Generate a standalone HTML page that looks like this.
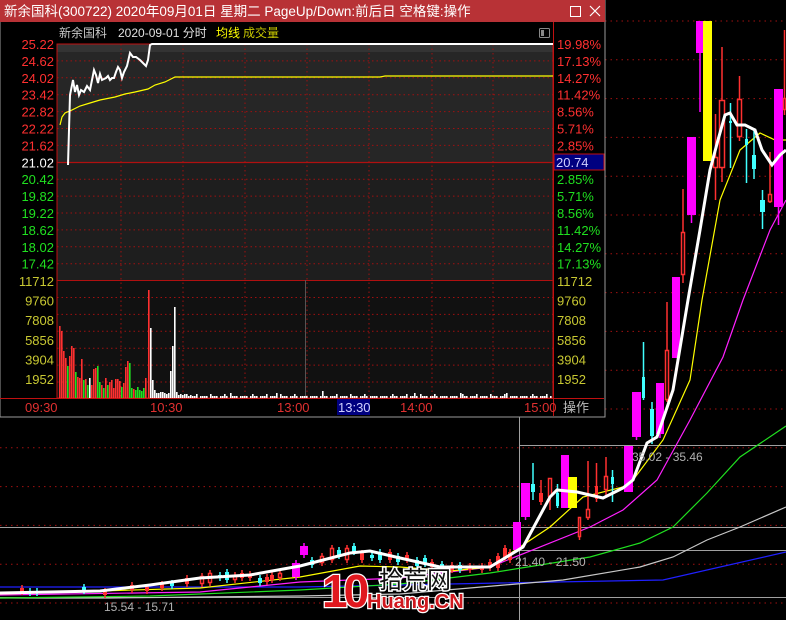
<!DOCTYPE html>
<html><head><meta charset="utf-8"><style>
html,body{margin:0;padding:0;background:#000;width:786px;height:620px;overflow:hidden}
svg{display:block}
text{font-family:"Liberation Sans","Noto Sans CJK SC",sans-serif}
</style></head><body>
<svg id="s" width="786" height="620" viewBox="0 0 786 620" xmlns="http://www.w3.org/2000/svg">
<rect width="786" height="620" fill="#000"/>
<g id="bg"></g>
<g id="pop">
<rect x="0" y="0" width="605" height="417" fill="#000" stroke="#9a9a9a" stroke-width="1"/>
<rect x="0" y="0" width="605" height="22" fill="#b83236"/>
<text x="4" y="16" fill="#fff" font-size="13.5">新余国科(300722) 2020年09月01日 星期二 PageUp/Down:前后日 空格键:操作</text>
<rect x="570.5" y="6.5" width="10" height="10" fill="none" stroke="#fff" stroke-width="1"/>
<path d="M590 6 L600 16 M600 6 L590 16" stroke="#fff" stroke-width="1.2"/>
<text x="59" y="37" fill="#c8c8c8" font-size="12">新余国科</text>
<text x="118" y="37" fill="#e0e0e0" font-size="12">2020-09-01 分时</text>
<text x="216" y="37" fill="#ffff00" font-size="12">均线</text>
<text x="243" y="37" fill="#c8c800" font-size="12">成交量</text>
<rect x="539.5" y="28.5" width="10" height="9" fill="none" stroke="#888" rx="1"/><rect x="541" y="30" width="3" height="6" fill="#888"/>
<rect x="57" y="44" width="496" height="118" fill="#262626"/>
<rect x="57" y="44" width="496" height="8" fill="#333"/>
<rect x="57" y="162" width="496" height="118" fill="#1e1e1e"/>
<rect x="57" y="280" width="496" height="118" fill="#111"/>
<g id="pgrid"></g>
<rect x="57" y="44" width="496" height="354" fill="none" stroke="#c01010" stroke-width="1"/>
<line x1="57" y1="162.5" x2="553" y2="162.5" stroke="#b01010" stroke-width="1.2"/>
<line x1="57" y1="280.5" x2="553" y2="280.5" stroke="#b01010"/>
<line x1="0" y1="398.5" x2="604" y2="398.5" stroke="#c01010"/>
<line x1="553.5" y1="22" x2="553.5" y2="416" stroke="#c01010"/>
<line x1="305.5" y1="280" x2="305.5" y2="398" stroke="#555" stroke-width="1"/>
<g id="vol"></g>
<polyline fill="none" stroke="#ffff00" stroke-width="1.2" points="60,125 62,117 65,113 72,110 80,106 90,103 100,100 115,97 125,94 135,92 148,89 155,85 165,82 175,77 200,77 380,77 385,76 553,76"/>
<polyline fill="none" stroke="#fff" stroke-width="2" points="68,165 69,130 70,95 72,85 73,80 75,92 77,85 79,95 81,90 84,92 87,86 90,90 92,80 94,70 96,75 98,83 100,74 102,80 104,79 106,78 108,76 110,80 112,78 114,78 116,72 118,67 120,70 122,78 124,72 127,66 130,53 133,57 136,57 140,60 144,64 146,66 148,60 150,45 152,44 553,44"/>
<g font-size="13" text-anchor="end" id="llab"></g>
<g font-size="13" id="rlab"></g>
<rect x="554" y="154" width="50" height="16" fill="#000080" stroke="#c01010"/>
<text x="556" y="167" fill="#d0d0ff" font-size="13">20.74</text>
<text x="25" y="412" fill="#e03030" font-size="13">09:30</text>
<text x="150" y="412" fill="#e03030" font-size="13">10:30</text>
<text x="277" y="412" fill="#e03030" font-size="13">13:00</text>
<rect x="337" y="399" width="33" height="16" fill="#000080"/>
<text x="338" y="412" fill="#d0d0ff" font-size="13">13:30</text>
<text x="400" y="412" fill="#e03030" font-size="13">14:00</text>
<text x="524" y="412" fill="#e03030" font-size="13">15:00</text>
<text x="563" y="412" fill="#bbb" font-size="13">操作</text>
</g>
<g>
<text x="322" y="607" font-size="46" font-weight="bold" fill="#e0181e" stroke="#fff" stroke-width="2.5" paint-order="stroke" letter-spacing="-4" font-family="Liberation Sans,sans-serif">10</text>
<text x="379" y="588" font-size="24" fill="#111" stroke="#fff" stroke-width="3" paint-order="stroke">拾荒网</text>
<text x="367" y="608" font-size="20" font-weight="bold" fill="#d0181e" stroke="#fff" stroke-width="2.5" paint-order="stroke">Huang.CN</text>
</g>
</svg>
<script>
var NS="http://www.w3.org/2000/svg";
function el(p,t,a){var e=document.createElementNS(NS,t);for(var k in a)e.setAttribute(k,a[k]);p.appendChild(e);return e;}
var bg=document.getElementById('bg');
for(var y=21;y<620;y+=38.8){el(bg,'line',{x1:0,y1:y.toFixed(1),x2:786,y2:y.toFixed(1),stroke:'#a01010','stroke-dasharray':'1.5,4','stroke-width':1});}
[[445,'#a0a0a0',520],[527,'#a0a0a0',0],[550,'#a0a0a0',520],[597,'#a0a0a0',0]].forEach(function(l){el(bg,'line',{x1:l[2],y1:l[0]+.5,x2:786,y2:l[0]+.5,stroke:l[1],'stroke-width':1});});
el(bg,'line',{x1:519.5,y1:417,x2:519.5,y2:620,stroke:'#a0a0a0'});
function pl(pts,c,w){el(bg,'polyline',{points:pts,fill:'none',stroke:c,'stroke-width':w});}
pl('0,587 300,587 400,585 500,583 663,580 786,552','#2020ff',1.2);
pl('0,598 110,598 200,597 300,596 400,594 563,580 640,567 673,557 707,540 740,527 786,507','#c8c8c8',1.2);
pl('0,598 150,596 300,590 400,584 490,573 590,557 640,543 673,527 707,493 740,457 786,426','#20e020',1.2);
pl('0,595 200,592 300,582 400,578 490,567 590,527 623,510 657,480 690,420 723,357 743,300 770,230 786,200','#ff20ff',1.2);
pl('0,594 200,588 300,577 360,566 400,567 450,571 490,567 550,527 583,497 623,487 633,480 663,440 690,380 702,300 720,200 740,150 760,133 775,140 786,140','#ffff00',1.2);
var C=[[513,8,522,550,522,552,'m'],[521,9,483,517,483,520,'m'],[531,4,484,492,463,500,'c'],[539,4,493,502,480,505,'r'],[548,4,478,497,479,510,'h'],[556,3,493,506,484,508,'c'],[561,8,455,508,455,508,'m'],[568,9,477,508,477,508,'y'],[578,3,517,537,517,540,'h'],[586,4,509,518,461,520,'h'],[595,3,486,499,463,502,'r'],[604,4,476,490,457,496,'h'],[611,3,477,484,470,502,'c'],[624,9,446,492,446,492,'m'],[632,9,392,437,392,440,'m'],[642,3,377,398,342,400,'c'],[650,4,409,436,402,444,'c'],[656,8,383,434,383,438,'m'],[665,4,350,400,302,402,'h'],[672,8,277,358,277,358,'m'],[681,4,232,275,189,283,'h'],[687,9,137,215,137,223,'m'],[696,8,21,53,21,112,'m'],[703,9,21,161,21,161,'y'],[713,5,157,168,114,200,'h'],[719,6,100,168,47,182,'h'],[729,3,121,123,103,168,'c'],[737,5,99,137,76,141,'h'],[745,3,139,145,129,183,'c'],[752,4,155,169,130,179,'c'],[760,5,200,212,190,229,'c'],[768,4,194,202,152,203,'h'],[774,9,89,207,89,225,'m'],[783,3,98,110,30,115,'h']];
var sm=[[20,588,592,'r'],[28,591,593,'c'],[35,591,593,'c'],[82,587,591,'c'],[103,591,595,'r'],[130,585,590,'r'],[145,587,591,'r'],[160,584,588,'r'],[170,583,586,'c'],[185,578,584,'r'],[200,576,584,'h'],[208,573,583,'h'],[218,575,578,'c'],[225,572,580,'c'],[233,575,580,'h'],[240,573,578,'r'],[248,574,578,'r'],[258,578,583,'c'],[265,577,582,'r'],[270,575,580,'r'],[278,573,578,'h'],[292,563,577,'m'],[300,546,555,'m'],[310,560,565,'c'],[320,556,563,'h'],[330,548,560,'h'],[337,550,556,'c'],[345,548,560,'h'],[352,546,552,'c'],[360,553,560,'r'],[370,555,558,'c'],[378,552,560,'c'],[388,552,560,'r'],[396,556,562,'c'],[405,555,560,'r'],[415,560,566,'c'],[423,558,564,'c'],[430,562,567,'r'],[440,564,568,'c'],[450,565,570,'r'],[458,565,570,'c'],[468,566,570,'r'],[480,566,570,'r'],[488,562,568,'r'],[496,556,568,'r'],[503,548,558,'r'],[508,552,560,'r']];
sm.forEach(function(s){C.push([s[0],s[3]=='m'?8:4,s[1],s[2],s[1]-3,s[2]+3,s[3]]);});
var col={m:'#ff00ff',y:'#ffff00',c:'#40ffff',r:'#ff3030',h:'#ff3030'};
C.forEach(function(c){var x=c[0],w=c[1],cx=x+w/2;el(bg,'line',{x1:cx,y1:c[4],x2:cx,y2:c[5],stroke:col[c[6]],'stroke-width':1.5});
 if(c[6]=='h')el(bg,'rect',{x:x+.5,y:c[2]+.5,width:w-1,height:Math.max(1,c[3]-c[2]-1),fill:'#000',stroke:col.h,'stroke-width':1.5});
 else el(bg,'rect',{x:x,y:c[2],width:w,height:Math.max(2,c[3]-c[2]),fill:col[c[6]]});});
pl('0,593 100,591 150,585 200,578 250,575 300,566 350,553 370,551 400,558 440,567 490,567 523,547 550,497 557,490 577,492 603,498 623,488 633,480 647,443 657,437 673,390 688,300 700,230 710,170 718,140 725,115 730,113 737,125 745,125 755,130 762,150 772,165 780,155 786,150','#fff',3);
[[632,461,'35.02 - 35.46'],[515,566,'21.40 - 21.50'],[104,611,'15.54 - 15.71']].forEach(function(t){var e=el(bg,'text',{x:t[0],y:t[1],fill:'#b0b0b0','font-size':12});e.textContent=t[2];});
var pg=document.getElementById('pgrid');
for(var i=1;i<21;i++){var y=44+i*16.9;if(Math.abs(y-162)<2||Math.abs(y-280)<2)continue;el(pg,'line',{x1:57,y1:y.toFixed(1),x2:553,y2:y.toFixed(1),stroke:'#a01010','stroke-dasharray':'1.5,3'});}
[121,183,245,307,369,432,493].forEach(function(x){el(pg,'line',{x1:x,y1:44,x2:x,y2:398,stroke:'#a01010','stroke-dasharray':'1.5,3'});});
var V=[[59,326,'r'],[61,331,'r'],[63,351,'r'],[65,358,'r'],[67,366,'g'],[69,356,'r'],[71,346,'r'],[73,348,'r'],[75,372,'g'],[77,377,'r'],[79,378,'r'],[81,359,'r'],[83,380,'g'],[85,379,'r'],[87,385,'g'],[89,378,'w'],[91,385,'r'],[93,369,'r'],[95,368,'r'],[97,366,'g'],[99,382,'g'],[101,385,'r'],[103,388,'g'],[105,378,'r'],[107,385,'g'],[109,382,'r'],[111,380,'r'],[113,388,'r'],[115,379,'r'],[117,379,'r'],[119,381,'r'],[121,387,'g'],[123,383,'r'],[125,367,'r'],[127,361,'r'],[129,363,'g'],[131,388,'g'],[133,389,'r'],[135,390,'g'],[137,387,'g'],[139,390,'g'],[141,391,'g'],[143,388,'g'],[145,378,'r'],[148,290,'r'],[150,328,'w'],[152,380,'w'],[154,390,'w'],[156,393,'w'],[158,393,'w'],[160,392,'w'],[162,392,'w'],[164,393,'w'],[166,394,'w'],[168,393,'w'],[170,371,'w'],[172,346,'w'],[174,307,'w'],[176,392,'w'],[178,395,'w'],[180,394,'w'],[182,395,'w'],[184,394,'w'],[186,394,'w'],[188,396,'w'],[190,395,'w']];
for(var x=192;x<552;x+=2){var h=396+(x%7==0?-2:0)+(x%23==0?-3:0);if(x%5==3)continue;V.push([x,h,'w']);}
var vc={r:'#ff3030',g:'#20e020',w:'#fff'},vg=document.getElementById('vol');
V.forEach(function(v){el(vg,'rect',{x:v[0],y:v[1],width:1.6,height:398-v[1],fill:vc[v[2]]});});
var L=['25.22','24.62','24.02','23.42','22.82','22.22','21.62','21.02','20.42','19.82','19.22','18.62','18.02','17.42'];
var R=['19.98%','17.13%','14.27%','11.42%','8.56%','5.71%','2.85%','','2.85%','5.71%','8.56%','11.42%','14.27%','17.13%'];
var ll=document.getElementById('llab'),rl=document.getElementById('rlab');
L.forEach(function(s,i){var y=49+i*16.9,c=i<7?'#ff3030':(i==7?'#fff':'#20e020');var e=el(ll,'text',{x:54,y:y.toFixed(1),fill:c});e.textContent=s;
 if(R[i]){var f=el(rl,'text',{x:557,y:y.toFixed(1),fill:i<7?'#ff3030':'#20e020'});f.textContent=R[i];}});
['11712','9760','7808','5856','3904','1952'].forEach(function(s,i){var y=286+i*19.6;var e=el(ll,'text',{x:54,y:y.toFixed(1),fill:'#c8c832'});e.textContent=s;var f=el(rl,'text',{x:557,y:y.toFixed(1),fill:'#c8c832'});f.textContent=s;});
</script>
</body></html>
